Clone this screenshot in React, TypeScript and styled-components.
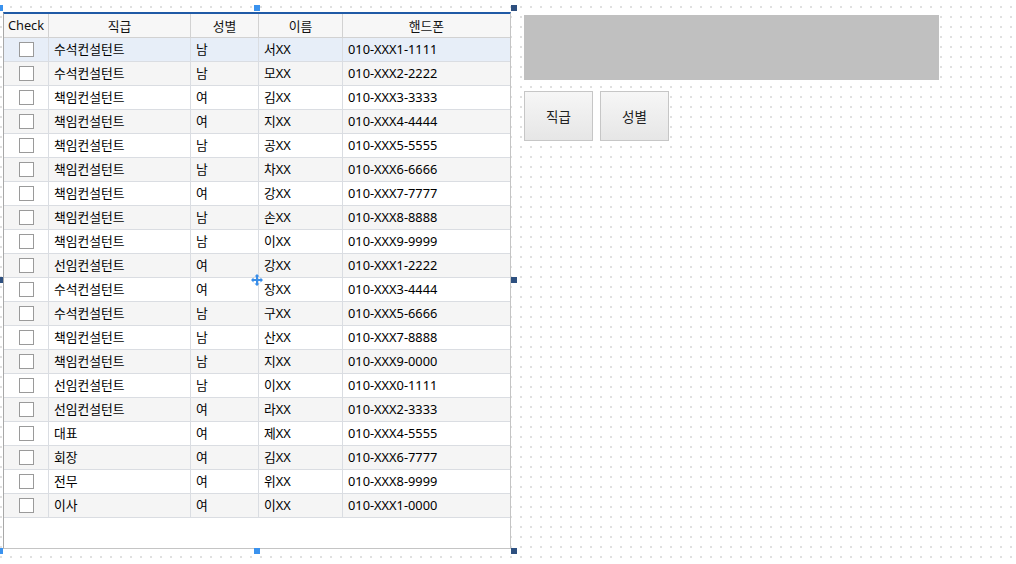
import styled, { createGlobalStyle } from 'styled-components';

const GlobalStyle = createGlobalStyle`
  html, body { margin: 0; padding: 0; background: #fff; }
  body { font-family: "Noto Sans", "Noto Sans CJK KR", sans-serif; }
`;

interface Person {
  rank: string;
  gender: string;
  name: string;
  phone: string;
}

const rows: Person[] = [
  { rank: '수석컨설턴트', gender: '남', name: '서XX', phone: '010-XXX1-1111' },
  { rank: '수석컨설턴트', gender: '남', name: '모XX', phone: '010-XXX2-2222' },
  { rank: '책임컨설턴트', gender: '여', name: '김XX', phone: '010-XXX3-3333' },
  { rank: '책임컨설턴트', gender: '여', name: '지XX', phone: '010-XXX4-4444' },
  { rank: '책임컨설턴트', gender: '남', name: '공XX', phone: '010-XXX5-5555' },
  { rank: '책임컨설턴트', gender: '남', name: '차XX', phone: '010-XXX6-6666' },
  { rank: '책임컨설턴트', gender: '여', name: '강XX', phone: '010-XXX7-7777' },
  { rank: '책임컨설턴트', gender: '남', name: '손XX', phone: '010-XXX8-8888' },
  { rank: '책임컨설턴트', gender: '남', name: '이XX', phone: '010-XXX9-9999' },
  { rank: '선임컨설턴트', gender: '여', name: '강XX', phone: '010-XXX1-2222' },
  { rank: '수석컨설턴트', gender: '여', name: '장XX', phone: '010-XXX3-4444' },
  { rank: '수석컨설턴트', gender: '남', name: '구XX', phone: '010-XXX5-6666' },
  { rank: '책임컨설턴트', gender: '남', name: '산XX', phone: '010-XXX7-8888' },
  { rank: '책임컨설턴트', gender: '남', name: '지XX', phone: '010-XXX9-0000' },
  { rank: '선임컨설턴트', gender: '남', name: '이XX', phone: '010-XXX0-1111' },
  { rank: '선임컨설턴트', gender: '여', name: '라XX', phone: '010-XXX2-3333' },
  { rank: '대표', gender: '여', name: '제XX', phone: '010-XXX4-5555' },
  { rank: '회장', gender: '여', name: '김XX', phone: '010-XXX6-7777' },
  { rank: '전무', gender: '여', name: '위XX', phone: '010-XXX8-9999' },
  { rank: '이사', gender: '여', name: '이XX', phone: '010-XXX1-0000' },
];

const headers = ['Check', '직급', '성별', '이름', '핸드폰'];
const COLS = '45px 142px 68px 84px 167px';

const Canvas = styled.div`
  position: relative;
  width: 1016px;
  height: 564px;
  overflow: hidden;
  box-sizing: border-box;
  padding: 12px 0 0 3px;
  display: flex;
  align-items: flex-start;
  background-color: #fff;
  background-image: conic-gradient(at 2px 2px, #fff 75%, #e0e0e0 0);
  background-size: 10px 10px;
  background-position: 0 6px;
`;

const GridControl = styled.div`
  width: 508px;
  height: 537px;
  box-sizing: border-box;
  background: #fff;
  border-top: 2px solid #1f5aa6;
  border-left: 1px solid #a8a8a8;
  border-right: 1px solid #c4c4c4;
  border-bottom: 1px solid #c4c4c4;
  font-size: 12.8px;
  color: #000;
`;

const HeaderRow = styled.div`
  display: grid;
  grid-template-columns: ${COLS};
  height: 24px;
  background: #f7f7f7;
  border-bottom: 1px solid #d2d2d2;
  box-sizing: border-box;
`;

const HeadCell = styled.div`
  display: flex;
  align-items: center;
  justify-content: center;
  padding-bottom: 1px;
  border-right: 1px solid #d2d2d2;
  color: #111;
  &:last-child { border-right: none; }
`;

const Row = styled.div<{ $tone: 'selected' | 'odd' | 'even' }>`
  display: grid;
  grid-template-columns: ${COLS};
  height: 24px;
  box-sizing: border-box;
  border-bottom: 1px solid #dadde2;
  background: ${({ $tone }) =>
    $tone === 'selected' ? '#e7eef8' : $tone === 'even' ? '#f5f5f5' : '#fff'};
`;

const Cell = styled.div`
  display: flex;
  align-items: center;
  padding: 0 0 2px 5px;
  border-right: 1px solid #dadde2;
  white-space: nowrap;
  overflow: hidden;
  &:last-child { border-right: none; }
`;

const CheckCell = styled(Cell)`
  padding: 0;
  justify-content: center;
`;

const Box = styled.span`
  width: 13px;
  height: 13px;
  border: 1px solid #9a9a9a;
  background: #fff;
  margin-left: 1px;
`;

const Side = styled.div`
  margin: 3px 0 0 13px;
  display: flex;
  flex-direction: column;
  gap: 11px;
`;

const Panel = styled.div`
  width: 415px;
  height: 65px;
  background: #c0c0c0;
`;

const ButtonRow = styled.div`
  display: flex;
  gap: 7px;
`;

const Button = styled.button`
  width: 69px;
  height: 50px;
  padding: 0;
  border: 1px solid #c6c6c6;
  background: linear-gradient(#f6f6f6, #e6e6e6);
  font-family: "Noto Sans CJK KR", sans-serif;
  font-size: 13.5px;
  color: #222;
`;

const Handle = styled.span<{ $dark?: boolean }>`
  position: absolute;
  width: 6px;
  height: 6px;
  background: ${({ $dark }) => ($dark ? '#2e5080' : '#3a92ee')};
`;

const MoveGlyph = styled.svg`
  position: absolute;
  left: 251px;
  top: 274px;
`;

const handles = [
  { x: -3, y: 5, dark: false },
  { x: 254, y: 5, dark: false },
  { x: 511, y: 5, dark: true },
  { x: -3, y: 277, dark: true },
  { x: 511, y: 277, dark: true },
  { x: -3, y: 548, dark: false },
  { x: 254, y: 548, dark: false },
  { x: 511, y: 548, dark: true },
];

export default function App() {
  return (
    <>
      <GlobalStyle />
      <Canvas>
        <GridControl>
          <HeaderRow>
            {headers.map((h) => (
              <HeadCell key={h}>{h}</HeadCell>
            ))}
          </HeaderRow>
          {rows.map((r, i) => (
            <Row key={i} $tone={i === 0 ? 'selected' : i % 2 === 1 ? 'even' : 'odd'}>
              <CheckCell><Box /></CheckCell>
              <Cell>{r.rank}</Cell>
              <Cell>{r.gender}</Cell>
              <Cell>{r.name}</Cell>
              <Cell>{r.phone}</Cell>
            </Row>
          ))}
        </GridControl>
        <Side>
          <Panel />
          <ButtonRow>
            <Button>직급</Button>
            <Button>성별</Button>
          </ButtonRow>
        </Side>
        {handles.map((h, i) => (
          <Handle key={i} $dark={h.dark} style={{ left: h.x, top: h.y }} />
        ))}
        <MoveGlyph width="12" height="12" viewBox="0 0 12 12">
          <path
            fill="#3a8ee8"
            d="M6 0 L8.5 2.5 H7 V5 H9.5 V3.5 L12 6 L9.5 8.5 V7 H7 V9.5 H8.5 L6 12 L3.5 9.5 H5 V7 H2.5 V8.5 L0 6 L2.5 3.5 V5 H5 V2.5 H3.5 Z"
          />
        </MoveGlyph>
      </Canvas>
    </>
  );
}
